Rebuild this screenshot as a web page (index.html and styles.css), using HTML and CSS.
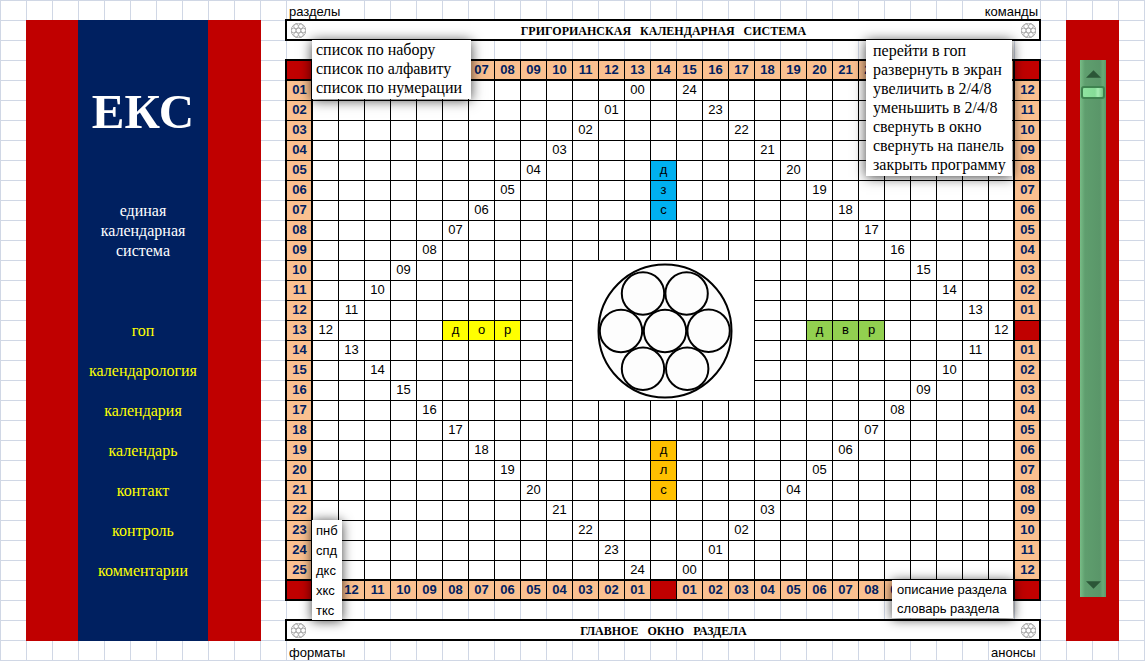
FILE: index.html
```html
<!DOCTYPE html>
<html lang="ru">
<head>
<meta charset="utf-8">
<title>ЕКС — единая календарная система</title>
<link rel="stylesheet" href="styles.css">
</head>
<body>
<svg class="symbols" aria-hidden="true">
  <symbol id="rosette" viewBox="0 0 136 136">
    <g fill="#fdfdfd" stroke="currentColor">
      <circle cx="68" cy="68" r="66.5"/>
      <circle cx="46" cy="30.5" r="21.2"/>
      <circle cx="89.600" cy="30.500" r="21.2"/>
      <circle cx="24" cy="68" r="21.2"/>
      <circle cx="68" cy="68" r="21.2"/>
      <circle cx="111.600" cy="67.700" r="21.2"/>
      <circle cx="46" cy="105.700" r="21.2"/>
      <circle cx="90.200" cy="105.700" r="21.2"/>
    </g>
  </symbol>
</svg>
<div class="sheet">
  <aside class="brand">
    <h1 class="brand-name">ЕКС</h1>
    <p class="brand-full">единая<br>календарная<br>система</p>
    <nav class="nav">
      <a href="#gop">гоп</a>
      <a href="#calendarology">календарология</a>
      <a href="#calendaria">календария</a>
      <a href="#calendar">календарь</a>
      <a href="#contact">контакт</a>
      <a href="#control">контроль</a>
      <a href="#comments">комментарии</a>
    </nav>
  </aside>

  <main class="main">
    <div class="labels labels-top">
      <button type="button" class="label">разделы</button>
      <button type="button" class="label label-end">команды</button>
    </div>
    <div class="bar">
      <svg class="bar-icon" aria-hidden="true"><use href="#rosette"/></svg>
      <h2 class="bar-title">ГРИГОРИАНСКАЯ   КАЛЕНДАРНАЯ   СИСТЕМА</h2>
      <svg class="bar-icon" aria-hidden="true"><use href="#rosette"/></svg>
      <menu class="popup popup-sections">
        <li><button type="button">список по набору</button></li>
        <li><button type="button">список по алфавиту</button></li>
        <li><button type="button">список по нумерации</button></li>
      </menu>
      <menu class="popup popup-commands">
        <li><button type="button">перейти в гоп</button></li>
        <li><button type="button">развернуть в экран</button></li>
        <li><button type="button">увеличить в 2/4/8</button></li>
        <li><button type="button">уменьшить в 2/4/8</button></li>
        <li><button type="button">свернуть в окно</button></li>
        <li><button type="button">свернуть на панель</button></li>
        <li><button type="button">закрыть программу</button></li>
      </menu>
    </div>

    <table class="calendar" id="calendar"></table>

    <div class="bar">
      <svg class="bar-icon" aria-hidden="true"><use href="#rosette"/></svg>
      <h2 class="bar-title">ГЛАВНОЕ   ОКНО   РАЗДЕЛА</h2>
      <svg class="bar-icon" aria-hidden="true"><use href="#rosette"/></svg>
      <menu class="popup popup-formats">
        <li><button type="button">пнб</button></li>
        <li><button type="button">спд</button></li>
        <li><button type="button">дкс</button></li>
        <li><button type="button">хкс</button></li>
        <li><button type="button">ткс</button></li>
      </menu>
      <menu class="popup popup-about">
        <li><button type="button">описание раздела</button></li>
        <li><button type="button">словарь раздела</button></li>
      </menu>
    </div>
    <div class="labels labels-bottom">
      <button type="button" class="label">форматы</button>
      <button type="button" class="label label-end label-short">анонсы</button>
    </div>
  </main>

  <aside class="side">
    <div class="scroller">
      <button type="button" class="arrow" aria-label="Вверх"><svg viewBox="0 0 16 8"><path d="M8 0 16 8H0z"/></svg></button>
      <input type="range" class="track" min="0" max="100" value="0" aria-label="Прокрутка">
      <button type="button" class="arrow" aria-label="Вниз"><svg viewBox="0 0 16 8"><path d="M0 0H16L8 8z"/></svg></button>
    </div>
  </aside>
</div>
<script src="script.js"></script>
</body>
</html>
```
FILE: styles.css
```css
:root {
  --red: #c00000;
  --navy: #002060;
  --peach: #fac090;
  --line: #d0d7e5;
  --sans: "Liberation Sans", Arial, sans-serif;
  --serif: "Liberation Serif", "Times New Roman", serif;
}

* { box-sizing: border-box; }

body {
  margin: 0;
  background-color: #fff;
  background-image:
    linear-gradient(to right, var(--line) 1px, transparent 1px),
    linear-gradient(to bottom, var(--line) 1px, transparent 1px);
  background-size: 26px 20px;
  font: 13px/20px var(--sans);
  color: #000;
}

button {
  margin: 0;
  padding: 0;
  border: 0;
  background: none;
  font: inherit;
  color: inherit;
  text-align: left;
  white-space: nowrap;
  cursor: pointer;
}

.symbols { position: absolute; width: 0; height: 0; }

.sheet {
  display: flex;
  padding: 0 26px;
}

/* left panel */
.brand {
  flex: 0 0 235px;
  margin: 20px 0;
  border: solid var(--red);
  border-width: 0 53px 0 52px;
  background: var(--navy);
  color: #fff;
  font: 16px/20px var(--serif);
  text-align: center;
}

.brand-name {
  margin: 0;
  padding: 62px 0 58px;
  font-size: 49px;
  line-height: 60px;
}

.brand-full { margin: 0 0 60px; padding-top: 1px; }

.nav {
  display: flex;
  flex-direction: column;
  align-items: center;
  gap: 20px;
}

.nav a { color: #ff0; text-decoration: none; }

/* central part */
.main {
  flex: 1;
  min-width: 0;
  margin: 0 25px 0 24px;
}

.labels {
  display: flex;
  justify-content: space-between;
  padding: 1px 1px 0 2px;
}

.labels-bottom { padding-top: 0; }

.label {
  width: 77px;
  height: 18px;
  padding: 3px 2px 0;
  background: #fff;
  line-height: 15px;
}

.labels-bottom .label { height: 19px; padding-top: 4px; }
.labels-bottom { padding-bottom: 1px; }
.label-end { text-align: right; }
.label-short { width: 51px; padding-right: 5px; }

.bar {
  position: relative;
  display: flex;
  align-items: center;
  height: 22px;
  padding: 0 3px 0 4px;
  border: 2px solid #000;
  background: #fff;
}

.bar-icon {
  width: 15px;
  height: 15px;
  color: #999;
  stroke-width: 7;
}

.bar-title {
  flex: 1;
  margin: 0;
  padding-top: 2px;
  font: bold 12px/18px var(--serif);
  text-align: center;
  white-space: pre;
}

.popup {
  position: absolute;
  z-index: 1;
  margin: 0;
  padding: 0 4px;
  background: #fff;
  box-shadow: 0 1px 12px rgba(0, 0, 0, 0.75);
  list-style: none;
}

.popup li { display: flex; }

.popup-sections,
.popup-commands {
  top: calc(100% + 1px);
  padding-bottom: 2px;
  font: 16px/19px var(--serif);
}

.popup-sections { left: 25px; width: 159px; }
.popup-commands { right: 27px; width: 146px; padding: 1px 7px 2px; }

.popup-formats { left: 25px; bottom: calc(100% + 1px); line-height: 18px; }
.popup-formats li { padding-top: 2px; }
.popup-about { right: 26px; bottom: calc(100% + 3px); width: 121px; padding: 0 5px; line-height: 19px; }

.calendar {
  width: 100%;
  margin: 18px 0;
  border: 2px solid #000;
  border-collapse: collapse;
  table-layout: fixed;
  background: #fff;
  text-align: center;
}

.calendar th,
.calendar td {
  height: 20px;
  padding: 0 0 0 1px;
  border: 1px solid #000;
  line-height: 18px;
}

.calendar th { background: var(--peach); color: var(--navy); }
.calendar .corner { background: var(--red); }
.calendar thead { border-bottom: 2px solid #000; }
.calendar tfoot { border-top: 2px solid #000; }
.calendar .row-start { border-right-width: 2px; }
.calendar .row-end { border-left-width: 2px; }
.calendar .blue { background: #00b0f0; }
.calendar .yellow { background: #ff0; }
.calendar .green { background: #92d050; }
.calendar .orange { background: #ffc000; }

.calendar .hub { padding: 1px 0 0 4px; }

.emblem {
  display: block;
  width: 136px;
  height: 136px;
  margin: 0 auto;
  stroke-width: 2;
}

/* right panel */
.side {
  display: flex;
  flex: 0 0 53px;
  margin: 20px 0;
  padding: 40px 13px 44px 14px;
  background: var(--red);
}

.scroller {
  display: flex;
  flex: 1;
  flex-direction: column;
  align-items: center;
  background: linear-gradient(to right, #79bd87 0, #5f9e6e 5px, #5a9669 20px, #68aa77 23px, #5c996a 100%);
}

.arrow { height: 26px; padding: 10px 0 8px; line-height: 0; }
.arrow svg { width: 15px; height: 8px; fill: #2b5637; }

.track {
  flex: 1;
  width: 24px;
  min-height: 0;
  margin: 0;
  appearance: none;
  background: none;
  writing-mode: vertical-lr;
}

.track::-webkit-slider-thumb {
  appearance: none;
  width: 24px;
  height: 13px;
  border: 2px solid #3f8350;
  border-radius: 3px;
  background: linear-gradient(to right, #8fe3a0, #85dc97 60%, #a5edb3 75%, #72c584);
}
```
FILE: script.js
```js
const COLS = 27;
const ROWS = 25;
const pad = (n) => String(n).padStart(2, "0");

const marks = {};
const mark = (row, col, text, color) => { marks[row + ":" + col] = { text, color }; };

[..."дзс"].forEach((ch, i) => mark(5 + i, 14, ch, "blue"));
[..."длс"].forEach((ch, i) => mark(19 + i, 14, ch, "orange"));
[..."дор"].forEach((ch, i) => mark(13, 6 + i, ch, "yellow"));
[..."двр"].forEach((ch, i) => mark(13, 20 + i, ch, "green"));

// The hours run along the four sides of a rhombus.
for (let r = 1; r <= ROWS; r++) {
  mark(r, r <= 13 ? 14 - r : r - 12, pad(r - 1), "");
  mark(r, r <= 13 ? 14 + r : 40 - r, pad(25 - r), "");
}

const th = (text, cls) => `<th class="${cls}">${text}</th>`;

// Columns under an open menu stay unnumbered.
function edgeRow(label, first, last) {
  let html = "<tr>" + th("", "row-start corner");
  for (let c = 1; c <= COLS; c++) {
    const text = label(c);
    html += th(c >= first && c <= last ? text : "", text ? "" : "corner");
  }
  return html + th("", "row-end corner") + "</tr>";
}

function bodyRow(r) {
  let html = "<tr>" + th(pad(r), "row-start");
  for (let c = 1; c <= COLS; c++) {
    if (r >= 10 && r <= 16 && c >= 11 && c <= 17) {
      if (r === 10 && c === 11) {
        html += '<td class="hub" colspan="7" rowspan="7"><svg class="emblem" aria-hidden="true"><use href="#rosette"/></svg></td>';
      }
      continue;
    }
    const m = marks[r + ":" + c];
    html += m ? `<td class="${m.color}">${m.text}</td>` : "<td></td>";
  }
  return html + (r === 13 ? th("", "row-end corner") : th(pad(Math.abs(13 - r)), "row-end")) + "</tr>";
}

let body = "";
for (let r = 1; r <= ROWS; r++) body += bodyRow(r);

document.getElementById("calendar").innerHTML =
  "<thead>" + edgeRow(pad, 7, 22) + "</thead>" +
  "<tbody>" + body + "</tbody>" +
  "<tfoot>" + edgeRow((c) => (c === 14 ? "" : pad(Math.abs(14 - c))), 2, 23) + "</tfoot>";
```
